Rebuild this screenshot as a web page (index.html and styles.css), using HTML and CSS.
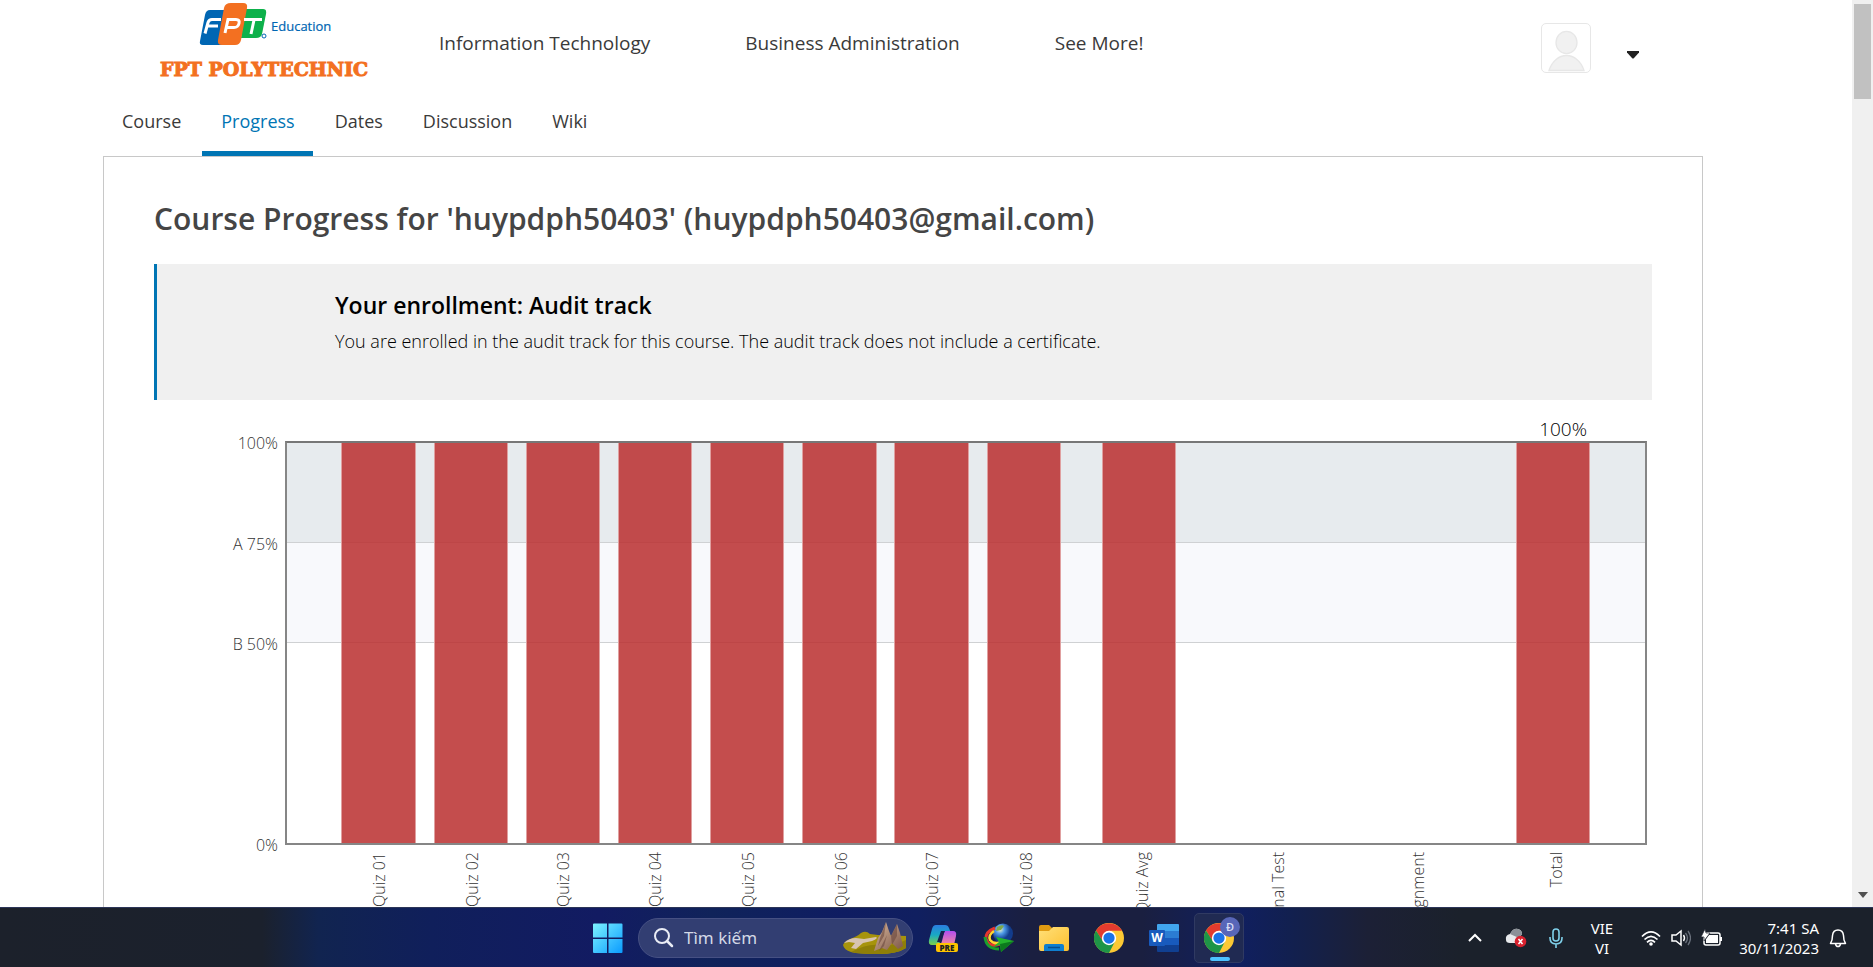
FILE: index.html
```html
<!DOCTYPE html>
<html lang="en">
<head>
<meta charset="utf-8">
<title>Course Progress</title>
<link rel="stylesheet" href="styles.css">
</head>
<body>
<div class="browser">
  <div class="page">
    <header class="header">
      <a class="logo" href="#" aria-label="FPT Education - FPT Polytechnic">
        <svg width="220" height="80" viewBox="0 0 220 80">
          <g transform="translate(4 0)">
          <path d="M51 10h20l-6 35H44q-4 0-3-4l5-26q1-5 5-5z" fill="#0066b3"/>
          <path d="M86 9h18q4 0 3 5l-4 20q-1 4-6 4H82z" fill="#0db14b"/>
          <path d="M72 3h12q5 0 4 5l-6 32q-1 5-6 5H63q-5 0-4-5l6-32q1-5 7-5z" fill="#f37021"/>
          <g fill="none" stroke="#fff" stroke-width="3"><path d="M62 19.500h-9q-3 0-4 3l-3 11M49 26h10"/><path d="M66 33l3-13.500h8q4 0 3 4t-5 4h-7"/><path d="M85 19.500h18M95 20l-3 14"/></g>
          <circle cx="105" cy="36" r="2" fill="none" stroke="#0066b3"/>
          </g>
          <text class="logo-edu" x="116" y="31">Education</text>
          <text class="logo-poly" x="5" y="76">FPT POLYTECHNIC</text>
        </svg>
      </a>
      <nav class="main-nav">
        <a href="#">Information Technology</a>
        <a href="#">Business Administration</a>
        <a href="#">See More!</a>
      </nav>
      <div class="user">
        <a class="avatar" href="#" aria-label="Profile">
          <svg width="48" height="48" viewBox="0 0 48 48"><g fill="#f1f1f1" stroke="#e7e7e7" stroke-width="1.3"><ellipse cx="24.500" cy="18.500" rx="10.500" ry="11.200"/><path d="M7 46.500C10 37 17 31.500 24.500 31.500S39 37 42 46.500z"/></g></svg>
        </a>
        <button class="caret" aria-label="More options"><svg width="12" height="8" viewBox="0 0 12 8"><path d="M0 0h12v1.500L7 7q-1 1-2 0L0 1.500z" fill="#222"/></svg></button>
      </div>
    </header>
    <nav class="tabs">
      <a href="#">Course</a>
      <a class="active" href="#">Progress</a>
      <a href="#">Dates</a>
      <a href="#">Discussion</a>
      <a href="#">Wiki</a>
    </nav>
    <main class="panel">
      <h1>Course Progress for 'huypdph50403' (huypdph50403@gmail.com)</h1>
      <section class="notice">
        <h2>Your enrollment: Audit track</h2>
        <p>You are enrolled in the audit track for this course. The audit track does not include a certificate.</p>
      </section>
      <section class="chart">
        <div class="y-axis"><span>100%</span><span>A 75%</span><span>B 50%</span><span></span><span>0%</span></div>
        <div class="plot">
          <div class="band band-a"></div>
          <div class="band band-b"></div>
          <div class="bar" style="left:4.01%"></div>
          <div class="bar" style="left:10.79%"></div>
          <div class="bar" style="left:17.57%"></div>
          <div class="bar" style="left:24.36%"></div>
          <div class="bar" style="left:31.15%"></div>
          <div class="bar" style="left:37.94%"></div>
          <div class="bar" style="left:44.73%"></div>
          <div class="bar" style="left:51.52%"></div>
          <div class="bar" style="left:60%"></div>
          <div class="bar" style="left:90.48%"></div>
          <span class="total">100%</span>
        </div>
        <div class="x-axis">
          <span style="left:6.9%">Quiz 01</span>
          <span style="left:13.7%">Quiz 02</span>
          <span style="left:20.4%">Quiz 03</span>
          <span style="left:27.2%">Quiz 04</span>
          <span style="left:34%">Quiz 05</span>
          <span style="left:40.8%">Quiz 06</span>
          <span style="left:47.5%">Quiz 07</span>
          <span style="left:54.4%">Quiz 08</span>
          <span style="left:62.9%">Quiz Avg</span>
          <span style="left:72.9%">Final Test</span>
          <span style="left:83.2%">Assignment</span>
          <span style="left:93.3%">Total</span>
        </div>
      </section>
    </main>
  </div>
  <div class="scrollbar"><div class="thumb"></div><svg width="10" height="6" viewBox="0 0 10 6"><path d="M0 0h10L5 6z" fill="#505050"/></svg></div>
</div>
<footer class="taskbar">
  <svg width="0" height="0" class="defs"><defs>
    <linearGradient id="win" x1="0" y1="0" x2="1" y2="1"><stop offset="0" stop-color="#7df3ff"/><stop offset="1" stop-color="#0a9bff"/></linearGradient>
    <linearGradient id="cpl" x1="0" y1="0" x2="0" y2="1"><stop offset="0" stop-color="#2b7de0"/><stop offset=".5" stop-color="#18a9c4"/><stop offset="1" stop-color="#7bd04a"/></linearGradient>
    <linearGradient id="cpr" x1="0" y1="0" x2="0" y2="1"><stop offset="0" stop-color="#b24df0"/><stop offset="1" stop-color="#f48a9c"/></linearGradient>
    <radialGradient id="globe" cx=".35" cy=".3"><stop offset="0" stop-color="#f2f5c8"/><stop offset=".45" stop-color="#4e9be8"/><stop offset="1" stop-color="#123c8c"/></radialGradient>
    <linearGradient id="fold" x1="0" y1="0" x2="1" y2="1"><stop offset="0" stop-color="#ffe07a"/><stop offset="1" stop-color="#fdbf2e"/></linearGradient>
    <linearGradient id="rock" x1="0" y1="0" x2="1" y2="1"><stop offset="0" stop-color="#d8b79c"/><stop offset="1" stop-color="#7c5648"/></linearGradient>
    <symbol id="chrome" viewBox="0 0 48 48">
      <circle cx="24" cy="24" r="24" fill="#fcc934"/>
      <path d="M24 12.500H44.800A24 24 0 0 0 3.200 12L14.500 30z" fill="#e33b2e"/>
      <path d="M33.500 29.500L24 48A24 24 0 0 1 3.200 12l11.300 17.500z" fill="#1e9547"/>
      <circle cx="24" cy="24" r="11.500" fill="#fff"/><circle cx="24" cy="24" r="9" fill="#1a73e8"/>
    </symbol>
  </defs></svg>
  <div class="dock">
    <button class="tile" aria-label="Start"><svg width="30" height="30" viewBox="0 0 30 30"><path d="M0 1.500Q0 .5 1 .5H14V14.500H0zM15.500.5H28.500Q29.500.5 29.500 1.500V14.500H15.500zM0 16H14V30H1Q0 30 0 29zM15.500 16H29.500V29Q29.500 30 28.500 30H15.500z" fill="url(#win)"/></svg></button>
    <label class="search">
      <svg width="22" height="22" viewBox="0 0 22 22"><circle cx="9" cy="9" r="7" fill="none" stroke="#e9ecf5" stroke-width="2"/><path d="M14 14l5 5" stroke="#e9ecf5" stroke-width="2.500" stroke-linecap="round"/></svg>
      <input type="text" placeholder="Tìm kiếm" aria-label="Tìm kiếm">
      <svg width="66" height="34" viewBox="0 0 66 34"><path d="M1 24C3 18 14 17 19 12q5-3 9 1l8 1 28 1v12q-9 6-28 6T9 31Q2 29 1 24z" fill="#a7940c"/><path d="M2 22q5-5 12-5l8 1 12-2q3 1-4 4l-9 2-7 6-5-1 4-5-6-1z" fill="#d8c4b0"/><path d="M9 31q17-9 29-7t26-5v8q-9 6-28 6T9 31z" fill="#8f7f08"/><path d="M32 30l4-13 4-6 4-10 3 9 2 5 6-12 3 9 3 13-5 3-6-6-5 7-5-2z" fill="url(#rock)"/><path d="M44 1l-2 14-6 10 2-8zM55 3l0 12-5 9-1-9zM45 14l-3 11-5 5z" fill="#6b473d" opacity=".6"/></svg>
    </label>
    <button class="tile" aria-label="Copilot"><svg width="32" height="32" viewBox="0 0 32 32"><path d="M8 3h9q3 0 4 3l2 5h-6q-3 0-4 4l-2 8H4q-4 0-3-5L4 7q1-4 4-4z" fill="url(#cpl)"/><path d="M17 9h8q4 0 3 5l-2 9H10q3 0 4-4l2-8z" fill="url(#cpr)"/><path d="M13 9h4l-5 11H9z" fill="#17204c"/><rect x="8" y="21" width="22" height="9" rx="2" fill="#ffc400"/><text class="pre" x="19" y="29">PRE</text></svg></button>
    <button class="tile" aria-label="Download manager"><svg width="32" height="32" viewBox="0 0 32 32"><circle cx="20" cy="11.500" r="10" fill="url(#globe)"/><path d="M14 5q5-3 7-1l-3 4-5 1z" fill="#7fa84a"/><g fill="none"><path d="M12 6Q2 10 3 17q3 9 14 5" stroke="#e5352c" stroke-width="3"/><path d="M11 9q-6 4-4 9 4 5 12 2" stroke="#ffd52e" stroke-width="2.500"/><path d="M2 15q1 12 14 12" stroke="#19a02d" stroke-width="3"/></g><path d="M13 15l18 4-13 11-1-7-7 2 6-5z" fill="#24b52e"/><path d="M17 22l14-3-13 11z" fill="#0c7a1e"/></svg></button>
    <button class="tile" aria-label="File Explorer"><svg width="32" height="32" viewBox="0 0 32 32"><path d="M1 5q0-2 2-2h8l4 4v5H1z" fill="#e09b12"/><path d="M1 9h10l4-4h14q2 0 2 2v20q0 2-2 2H3q-2 0-2-2z" fill="url(#fold)"/><path d="M6 29v-5q0-2 2-2h16q2 0 2 2v5z" fill="#0f7fd0"/><path d="M10 25.500h12" stroke="#074f8f" stroke-width="1.500"/></svg></button>
    <button class="tile" aria-label="Chrome"><svg width="30" height="30"><use href="#chrome"/></svg></button>
    <button class="tile" aria-label="Word"><svg width="30" height="30" viewBox="0 0 30 30"><path d="M9 1h20q1 0 1 1v6H8V2q0-1 1-1z" fill="#41a5ee"/><path d="M8 8h22v7H8z" fill="#2b7cd3"/><path d="M8 15h22v7H8z" fill="#185abd"/><path d="M8 22h22v6q0 1-1 1H9q-1 0-1-1z" fill="#103f91"/><rect x="0" y="7" width="16" height="16" rx="1" fill="#185abd"/><text class="word" x="8" y="19">W</text></svg></button>
    <button class="tile active" aria-label="Chrome profile"><svg width="48" height="48" viewBox="0 0 48 48"><use href="#chrome" x="9" y="9" width="30" height="30"/><circle cx="35" cy="13" r="10" fill="#5866b8"/><text class="badge" x="35" y="17">Đ</text></svg></button>
  </div>
  <div class="tray">
    <button aria-label="Hidden icons"><svg width="16" height="10" viewBox="0 0 16 10"><path d="M2 8l6-6 6 6" fill="none" stroke="#fff" stroke-width="2"/></svg></button>
    <button aria-label="Cloud status"><svg width="22" height="20" viewBox="0 0 22 20"><path d="M1 12q-1-5 4-6Q8 0 13 1q4 1 4 5l-6 9H5q-4 0-4-3z" fill="#e8eaed"/><path d="M5 6Q8 0 13 1q4 1 4 5l-3 4z" fill="#8b9097"/><circle cx="15.500" cy="13.500" r="5.800" fill="#d8222f"/><path d="M13.500 11l4 5M17.500 11l-4 5" stroke="#fff" stroke-width="1.500"/></svg></button>
    <button aria-label="Microphone"><svg width="14" height="22" viewBox="0 0 14 22"><g fill="none" stroke="#7fd0ea" stroke-width="1.600"><rect x="4" y="2" width="6" height="12" rx="3"/><path d="M1 10v1q0 6 6 6t6-6v-1M7 17v4"/></g></svg></button>
    <button class="lang"><span>VIE</span><span>VI</span></button>
    <button class="status" aria-label="Network, volume and battery">
      <svg width="20" height="16" viewBox="0 0 20 16"><g fill="none" stroke="#fff" stroke-width="1.700"><path d="M1 6.500q9-9 18 0M3.500 9.500q6.500-6.500 13 0M6 12.300q4-4 8 0"/></g><circle cx="10" cy="14" r="1.800" fill="#fff"/></svg>
      <svg width="20" height="18" viewBox="0 0 20 18"><path d="M1 6h4l5-4v14l-5-4H1z" fill="none" stroke="#fff" stroke-width="1.500"/><path d="M12.500 6q2 3 0 6" fill="none" stroke="#fff" stroke-width="1.400"/><path d="M14.500 4q4 5 0 10M17 2q5 7 0 14" fill="none" stroke="#69707b" stroke-width="1.300"/></svg>
      <svg width="22" height="18" viewBox="0 0 22 18"><rect x="3" y="4" width="16" height="12" rx="2" fill="none" stroke="#fff" stroke-width="1.500"/><path d="M8 6h9v8H5v-4z" fill="#fff"/><path d="M20 8v4" stroke="#fff" stroke-width="2"/><path d="M4 0L0 8h3v4l6-8H5z" fill="#fff" stroke="#1c212c" stroke-width=".7"/></svg>
    </button>
    <button class="clock"><span>7:41 SA</span><span>30/11/2023</span></button>
    <button aria-label="Notifications"><svg width="18" height="20" viewBox="0 0 18 20"><path d="M1.500 15.500q2-3 2-8Q4 2 9 2t5.500 5.500q0 5 2 8zM6.500 16q.5 2.500 2.500 2.500t2.500-2.500" fill="none" stroke="#fff" stroke-width="1.500" stroke-linejoin="round"/></svg></button>
  </div>
</footer>
</body>
</html>
```
FILE: styles.css
```css
* { box-sizing: border-box; }
html, body { height: 100%; }
body {
  margin: 0;
  display: flex;
  flex-direction: column;
  overflow: hidden;
  font-family: "Open Sans", "Noto Sans", sans-serif;
  background: #fff;
}
a { color: inherit; text-decoration: none; }
button { border: 0; padding: 0; background: none; color: inherit; font: inherit; }
svg { display: block; flex: none; }

.browser { flex: 1; min-height: 0; display: flex; overflow: hidden; }
.page { flex: 1; min-width: 0; padding: 0 149px 0 103px; }

.header { display: flex; align-items: flex-start; height: 88px; padding-left: 52px; }
.logo-edu { font: 500 13px "Open Sans", sans-serif; fill: #0066b3; stroke: #0066b3; stroke-width: .2; }
.logo-poly { font: 700 19px "DejaVu Serif", serif; fill: #f37021; stroke: #f37021; stroke-width: 1; }
.main-nav { display: flex; gap: 95px; padding: 28px 0 0 64px; font-size: 19px; line-height: 30px; color: #3a3a3a; white-space: nowrap; }
.user { display: flex; align-items: center; gap: 36px; margin-left: auto; padding: 23px 64px 0 0; }
.avatar { border: 1px solid #e7e7e7; border-radius: 5px; }
.caret { padding-top: 14px; }

.tabs { display: flex; gap: 3px; font-size: 18px; line-height: 26px; color: #3a3a3a; }
.tabs a { padding: 20px 18px 17px 19px; border-bottom: 5px solid transparent; height: 68px; }
.tabs .active { color: #0075b4; border-color: #0075b4; }

.panel { border: 1px solid #c8c8c8; padding: 41px 50px; color: #000; }
.panel h1 { margin: 0 0 25px; font-size: 30px; line-height: 41px; font-weight: 600; color: #454545; }
.notice { border-left: 3px solid #0075b4; background: #f0f0f0; padding: 24px 24px 45px 178px; margin-bottom: 41px; }
.notice h2 { margin: 0 0 6px; font-size: 23px; line-height: 34px; font-weight: 600; }
.notice p { margin: 0; font-size: 18px; font-weight: 300; line-height: 27px; }

.chart { display: grid; grid-template-columns: 124px 1fr; column-gap: 7px; padding-right: 5px; color: #333; font-size: 16px; font-weight: 300; line-height: 24px; }
.y-axis { display: flex; flex-direction: column; justify-content: space-between; margin: -10px 0 -12px; text-align: right; }
.y-axis span { height: 24px; }
.plot { position: relative; height: 404px; border: 2px solid #868686; border-top-color: #777; }
.band { height: 25%; border-bottom: 1px solid #cfd1d3; }
.band-a { background: #e7ebee; }
.band-b { background: #f8f9fc; }
.bar { position: absolute; top: 0; bottom: 0; width: 5.48%; background: rgba(186, 46, 46, .85); border: solid #e0a0a0; border-width: 0 1px; }
.total { position: absolute; right: 58px; bottom: 100%; font-size: 19px; line-height: 28px; color: #000; }
.x-axis { grid-column: 2; position: relative; height: 120px; }
.x-axis span { position: absolute; top: 7px; writing-mode: vertical-rl; transform: translateX(-50%) rotate(180deg); }

.scrollbar { width: 21px; background: #f0f0f0; padding: 4px 2px 9px; display: flex; flex-direction: column; justify-content: space-between; align-items: center; }
.thumb { width: 17px; height: 95px; background: #c1c1c1; }

.taskbar {
  height: 60px;
  display: flex;
  align-items: center;
  border-top: 1px solid #2c3558;
  background: linear-gradient(90deg, #1c212b 0, #1b212d 14%, #112450 17%, #101f5b 23%, #121b62 32%, #10235a 38%, #101d62 45%, #101f60 49%, #1a1f40 55%, #1a1f40 61%, #101f60 66%, #12204f 69%, #1c2036 73%, #1b212b 78%);
  color: #fff;
  font-family: "Noto Sans", sans-serif;
}
.defs { position: absolute; }
.dock { display: flex; align-items: center; gap: 5px; padding-left: 583px; }
.tile { width: 50px; height: 50px; display: flex; align-items: center; justify-content: center; border-radius: 5px; }
.tile.active { border: 1px solid #303a62; background: #202a52; position: relative; }
.tile.active::after { content: ""; position: absolute; bottom: 1px; left: 15px; width: 20px; height: 4px; border-radius: 2px; background: #4cc2ff; }
.search { display: flex; align-items: center; width: 275px; height: 40px; margin-right: 1px; padding: 0 4px 0 14px; border: 1px solid #465083; border-radius: 20px; background: #323e72; }
.search input { flex: 1; min-width: 0; margin: 0 0 0 9px; padding: 0; border: 0; background: none; color: #fff; font: 17px "Noto Sans", sans-serif; }
.search input::placeholder { color: #d3d8e6; opacity: 1; }
.pre { font: 800 8px "Open Sans", sans-serif; fill: #222; text-anchor: middle; }
.word { font: 700 12px "Open Sans", sans-serif; fill: #fff; text-anchor: middle; }
.badge { font: 600 11px "Open Sans", sans-serif; fill: #d7dcf5; text-anchor: middle; }

.tray { display: flex; align-items: center; gap: 22px; margin-left: auto; padding-right: 26px; font-size: 15px; line-height: 20px; }
.tray .lang, .tray .clock { display: flex; flex-direction: column; align-items: center; }
.tray .lang { margin: 0 6px; }
.tray .clock { align-items: flex-end; margin: 0 -12px 0 -6px; }
.status { display: flex; align-items: center; gap: 10px; }
```
